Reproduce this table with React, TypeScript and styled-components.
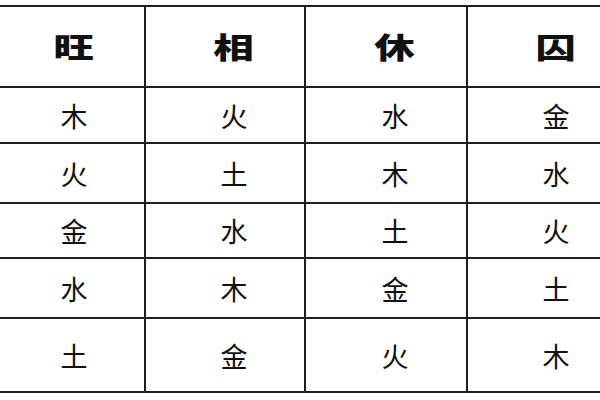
import React from "react";
import styled, { createGlobalStyle } from "styled-components";

const Global = createGlobalStyle`
  html, body { margin: 0; padding: 0; background: #ffffff; overflow: hidden; }
  body { width: 600px; height: 400px; font-family: "Noto Sans CJK SC", "Noto Sans", sans-serif; }
`;

const Page = styled.div`
  width: 600px;
  height: 400px;
  overflow: hidden;
  background: #ffffff;
`;

const Grid = styled.div`
  display: grid;
  grid-template-columns: 158px 158px 160px 158px;
  grid-template-rows: 79px 54px 58px 53px 58px 72px;
  gap: 2px;
  padding: 2px;
  width: max-content;
  background: #1e1e1e;
  margin-left: -16px;
  margin-top: 5px;
`;

const Cell = styled.div<{ $head?: boolean }>`
  background: #ffffff;
  display: flex;
  align-items: center;
  justify-content: center;
  padding-left: 18px;
  color: #111;
  font-family: "Noto Sans CJK SC", sans-serif;
  font-size: ${(p) => (p.$head ? "29px" : "27px")};
  font-weight: ${(p) => (p.$head ? 900 : 400)};
  line-height: 1;
`;

const HeadText = styled.span`
  display: inline-block;
  transform: scaleX(1.4);
`;

const head = ["旺", "相", "休", "囚"];
const rows = [
  ["木", "火", "水", "金"],
  ["火", "土", "木", "水"],
  ["金", "水", "土", "火"],
  ["水", "木", "金", "土"],
  ["土", "金", "火", "木"],
];

export default function App() {
  return (
    <Page>
      <Global />
      <Grid>
        {head.map((h) => (
          <Cell $head key={h}>
            <HeadText>{h}</HeadText>
          </Cell>
        ))}
        {rows.map((r, i) =>
          r.map((c, j) => <Cell key={`${i}-${j}`}>{c}</Cell>)
        )}
      </Grid>
    </Page>
  );
}
